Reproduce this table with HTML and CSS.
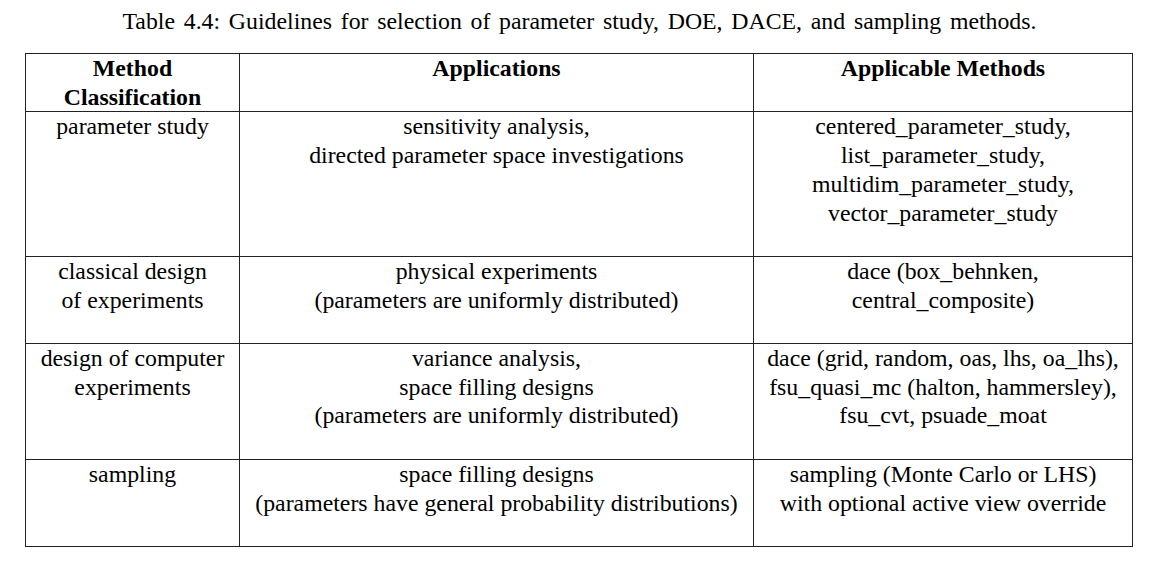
FILE: index.html
```html
<!DOCTYPE html>
<html>
<head>
<meta charset="utf-8">
<link rel="stylesheet" href="styles.css">
</head>
<body>
<div class="figure">
  <div class="caption">Table 4.4: Guidelines for selection of parameter study, DOE, DACE, and sampling methods.</div>
  <table class="guide">
    <colgroup>
      <col class="c1"><col class="c2"><col class="c3">
    </colgroup>
    <thead>
      <tr>
        <th>Method<br>Classification</th>
        <th>Applications</th>
        <th>Applicable Methods</th>
      </tr>
    </thead>
    <tbody>
      <tr>
        <td>parameter study</td>
        <td>sensitivity analysis,<br>directed parameter space investigations</td>
        <td>centered_parameter_study,<br>list_parameter_study,<br>multidim_parameter_study,<br>vector_parameter_study</td>
      </tr>
      <tr>
        <td>classical design<br>of experiments</td>
        <td>physical experiments<br>(parameters are uniformly distributed)</td>
        <td>dace (box_behnken,<br>central_composite)</td>
      </tr>
      <tr>
        <td>design of computer<br>experiments</td>
        <td>variance analysis,<br>space filling designs<br>(parameters are uniformly distributed)</td>
        <td>dace (grid, random, oas, lhs, oa_lhs),<br>fsu_quasi_mc (halton, hammersley),<br>fsu_cvt, psuade_moat</td>
      </tr>
      <tr>
        <td>sampling</td>
        <td>space filling designs<br>(parameters have general probability distributions)</td>
        <td>sampling (Monte Carlo or LHS)<br>with optional active view override</td>
      </tr>
    </tbody>
  </table>
</div>
</body>
</html>
```
FILE: styles.css
```css
html, body {
  margin: 0;
  padding: 0;
  background: #ffffff;
}
.figure {
  font-family: "Liberation Serif", "Times New Roman", serif;
  font-size: 23.8px;
  line-height: 28.7px;
  color: #000;
  padding-top: 7px;
}
.caption {
  text-align: center;
  height: 46px;
  word-spacing: 2.8px;
  padding-right: 4px;
}
.guide {
  margin-left: 25px;
  width: 1107px;
  border-collapse: collapse;
  table-layout: fixed;
}
.c1 { width: 214px; }
.c2 { width: 514px; }
.c3 { width: 379px; }
.guide th, .guide td {
  border: 1px solid #222;
  text-align: center;
  vertical-align: top;
  padding: 0 2px;
}
.guide th {
  font-weight: bold;
  height: 57.4px;
}
.guide td {
  padding-bottom: 28.7px;
}
```
